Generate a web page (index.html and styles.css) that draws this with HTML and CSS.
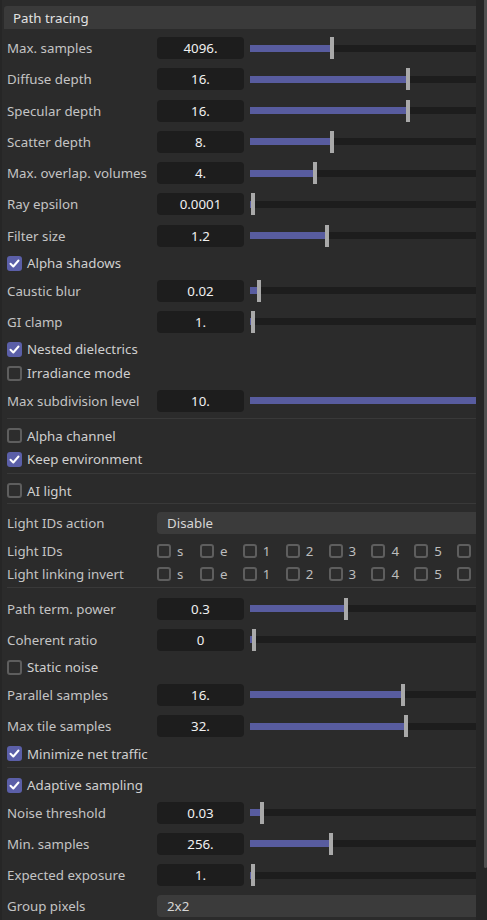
FILE: index.html
```html
<!DOCTYPE html>
<html>
<head>
<meta charset="utf-8">
<link rel="stylesheet" href="styles.css">
</head>
<body>
<div class="app">
  <div class="panel">
    <div class="header">Path tracing</div>

    <div class="row"><span class="label">Max. samples</span><span class="value">4096.</span><div class="slider"><div class="fill" style="width:35.4%"></div><div class="handle"></div><div class="rest"></div></div></div>
    <div class="row"><span class="label">Diffuse depth</span><span class="value">16.</span><div class="slider"><div class="fill" style="width:69%"></div><div class="handle"></div><div class="rest"></div></div></div>
    <div class="row"><span class="label">Specular depth</span><span class="value">16.</span><div class="slider"><div class="fill" style="width:69%"></div><div class="handle"></div><div class="rest"></div></div></div>
    <div class="row"><span class="label">Scatter depth</span><span class="value">8.</span><div class="slider"><div class="fill" style="width:35.4%"></div><div class="handle"></div><div class="rest"></div></div></div>
    <div class="row"><span class="label">Max. overlap. volumes</span><span class="value">4.</span><div class="slider"><div class="fill" style="width:27.9%"></div><div class="handle"></div><div class="rest"></div></div></div>
    <div class="row"><span class="label">Ray epsilon</span><span class="value">0.0001</span><div class="slider"><div class="fill" style="width:0.4%"></div><div class="handle"></div><div class="rest"></div></div></div>
    <div class="row"><span class="label">Filter size</span><span class="value">1.2</span><div class="slider"><div class="fill" style="width:33.2%"></div><div class="handle"></div><div class="rest"></div></div></div>
    <div class="check-row"><span class="cb on"><svg viewBox="0 0 15 15"><polyline points="3.5,7.8 6.3,10.5 11.5,4.5"/></svg></span><span class="cb-label">Alpha shadows</span></div>
    <div class="row"><span class="label">Caustic blur</span><span class="value">0.02</span><div class="slider"><div class="fill" style="width:3.1%"></div><div class="handle"></div><div class="rest"></div></div></div>
    <div class="row"><span class="label">GI clamp</span><span class="value">1.</span><div class="slider"><div class="fill" style="width:0.4%"></div><div class="handle"></div><div class="rest"></div></div></div>
    <div class="check-row"><span class="cb on"><svg viewBox="0 0 15 15"><polyline points="3.5,7.8 6.3,10.5 11.5,4.5"/></svg></span><span class="cb-label">Nested dielectrics</span></div>
    <div class="check-row"><span class="cb"></span><span class="cb-label">Irradiance mode</span></div>
    <div class="row"><span class="label">Max subdivision level</span><span class="value">10.</span><div class="slider"><div class="fill" style="width:100%"></div></div></div>

    <div class="sep"></div>
    <div class="check-row"><span class="cb"></span><span class="cb-label">Alpha channel</span></div>
    <div class="check-row"><span class="cb on"><svg viewBox="0 0 15 15"><polyline points="3.5,7.8 6.3,10.5 11.5,4.5"/></svg></span><span class="cb-label">Keep environment</span></div>

    <div class="sep"></div>
    <div class="check-row"><span class="cb"></span><span class="cb-label">AI light</span></div>

    <div class="sep tight"></div>
    <div class="row"><span class="label">Light IDs action</span><div class="dropdown">Disable</div></div>
    <div class="id-row"><span class="label">Light IDs</span>
      <div class="ids">
        <span class="id"><span class="cb small"></span>s</span>
        <span class="id"><span class="cb small"></span>e</span>
        <span class="id"><span class="cb small"></span>1</span>
        <span class="id"><span class="cb small"></span>2</span>
        <span class="id"><span class="cb small"></span>3</span>
        <span class="id"><span class="cb small"></span>4</span>
        <span class="id"><span class="cb small"></span>5</span>
        <span class="id"><span class="cb small"></span>6</span>
      </div>
    </div>
    <div class="id-row"><span class="label">Light linking invert</span>
      <div class="ids">
        <span class="id"><span class="cb small"></span>s</span>
        <span class="id"><span class="cb small"></span>e</span>
        <span class="id"><span class="cb small"></span>1</span>
        <span class="id"><span class="cb small"></span>2</span>
        <span class="id"><span class="cb small"></span>3</span>
        <span class="id"><span class="cb small"></span>4</span>
        <span class="id"><span class="cb small"></span>5</span>
        <span class="id"><span class="cb small"></span>6</span>
      </div>
    </div>

    <div class="sep"></div>
    <div class="row"><span class="label">Path term. power</span><span class="value">0.3</span><div class="slider"><div class="fill" style="width:41.6%"></div><div class="handle"></div><div class="rest"></div></div></div>
    <div class="row"><span class="label">Coherent ratio</span><span class="value">0</span><div class="slider"><div class="fill" style="width:0.9%"></div><div class="handle"></div><div class="rest"></div></div></div>
    <div class="check-row"><span class="cb"></span><span class="cb-label">Static noise</span></div>
    <div class="row"><span class="label">Parallel samples</span><span class="value">16.</span><div class="slider"><div class="fill" style="width:66.8%"></div><div class="handle"></div><div class="rest"></div></div></div>
    <div class="row"><span class="label">Max tile samples</span><span class="value">32.</span><div class="slider"><div class="fill" style="width:68.1%"></div><div class="handle"></div><div class="rest"></div></div></div>
    <div class="check-row"><span class="cb on"><svg viewBox="0 0 15 15"><polyline points="3.5,7.8 6.3,10.5 11.5,4.5"/></svg></span><span class="cb-label">Minimize net traffic</span></div>

    <div class="sep"></div>
    <div class="check-row"><span class="cb on"><svg viewBox="0 0 15 15"><polyline points="3.5,7.8 6.3,10.5 11.5,4.5"/></svg></span><span class="cb-label">Adaptive sampling</span></div>
    <div class="row"><span class="label">Noise threshold</span><span class="value">0.03</span><div class="slider"><div class="fill" style="width:4.4%"></div><div class="handle"></div><div class="rest"></div></div></div>
    <div class="row"><span class="label">Min. samples</span><span class="value">256.</span><div class="slider"><div class="fill" style="width:35%"></div><div class="handle"></div><div class="rest"></div></div></div>
    <div class="row"><span class="label">Expected exposure</span><span class="value">1.</span><div class="slider"><div class="fill" style="width:0.4%"></div><div class="handle"></div><div class="rest"></div></div></div>
    <div class="row"><span class="label">Group pixels</span><div class="dropdown">2x2</div></div>
  </div>
  <div class="scrollbar"><div class="thumb"></div></div>
</div>
</body>
</html>
```
FILE: styles.css
```css
* { box-sizing: border-box; }
html, body {
  margin: 0;
  padding: 0;
  background: #2b2b2b;
  height: 920px;
  overflow: hidden;
}
.app {
  display: flex;
  height: 920px;
  font-family: "Noto Sans", "Open Sans", sans-serif;
  font-size: 13.3px;
  color: #c4c4c4;
}
.panel {
  width: 476px;
  padding-left: 5px;
  overflow: hidden;
  border-left: 2px solid #262626;
}
.header {
  margin: 6px 0 3.4px -3px;
  height: 23px;
  background: #3a3a3a;
  border-radius: 3px 0 0 0;
  padding-left: 9px;
  display: flex;
  align-items: center;
  color: #e2e2e2;
}
.row {
  display: flex;
  align-items: center;
  height: 31.25px;
}
.label {
  width: 150px;
  flex: none;
  white-space: nowrap;
}
.value {
  width: 87px;
  height: 22px;
  flex: none;
  background: #1d1d1d;
  border-radius: 4px;
  display: flex;
  align-items: center;
  justify-content: center;
  color: #f0f0f0;
}
.slider {
  flex: 1;
  margin-left: 6px;
  height: 22px;
  display: flex;
  align-items: center;
}
.fill {
  height: 7px;
  background: #585c9f;
  flex: none;
}
.handle {
  width: 4px;
  height: 22px;
  background: #a9a9a9;
  flex: none;
}
.rest {
  flex: 1;
  height: 7px;
  background: #1d1d1d;
}
.check-row {
  display: flex;
  align-items: center;
  height: 23.75px;
}
.cb {
  width: 15px;
  height: 15px;
  flex: none;
  border-radius: 3px;
  border: 2px solid #5e5e5e;
  background: #2d2d2d;
  display: flex;
}
.cb.on {
  background: #5b5fa8;
  border: none;
}
.cb svg {
  width: 15px;
  height: 15px;
}
.cb polyline {
  fill: none;
  stroke: #ffffff;
  stroke-width: 2;
  stroke-linecap: round;
  stroke-linejoin: round;
}
.cb-label {
  margin-left: 5px;
  color: #cfcfcf;
  white-space: nowrap;
}
.sep {
  height: 1px;
  background: #393939;
  margin: 1.8px 0 4.8px;
}
.sep.tight {
  margin: 0.8px 0 3.3px;
}
.dropdown {
  flex: 1;
  height: 22px;
  background: #3b3b3b;
  border-radius: 4px 0 0 4px;
  display: flex;
  align-items: center;
  padding-left: 10px;
  color: #d6d6d6;
}
.id-row {
  display: flex;
  align-items: center;
  height: 23.3px;
}
.ids {
  display: flex;
  flex: 1;
  overflow: hidden;
  white-space: nowrap;
}
.id {
  width: 42.9px;
  flex: none;
  display: flex;
  align-items: center;
  color: #bdbdbd;
}
.cb.small {
  width: 14px;
  height: 14px;
  margin-right: 6px;
}
.scrollbar {
  width: 11px;
  flex: none;
  background: #262626;
  display: flex;
  justify-content: flex-end;
}
.thumb {
  width: 3px;
  height: 868px;
  background: #4f4f4f;
  border-radius: 0 0 2px 2px;
}
```
